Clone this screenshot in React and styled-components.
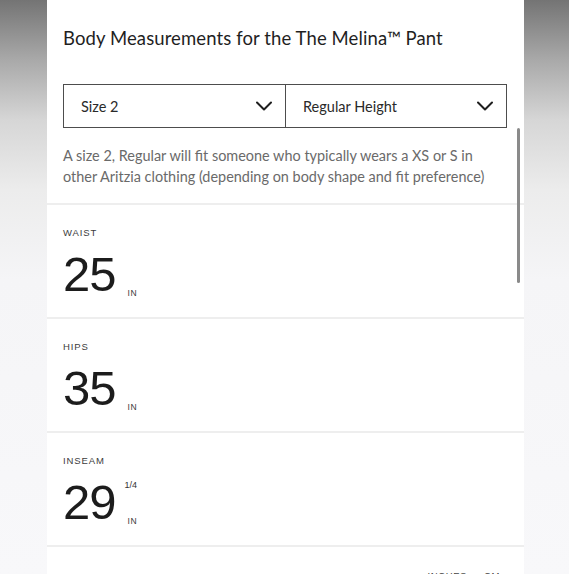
import React from "react";
import styled, { createGlobalStyle } from "styled-components";

const Global = createGlobalStyle`
  html, body { margin: 0; padding: 0; background: #ffffff; }
  body { font-family: "Lato", "Liberation Sans", sans-serif; }
  * { box-sizing: border-box; }
`;

const Page = styled.div`
  height: 574px;
  overflow: hidden;
  background: linear-gradient(
    to bottom,
    #747474 0px,
    #a9a9a9 60px,
    #d6d6d6 120px,
    #ececec 190px,
    #f5f5f7 280px,
    #f8f8fa 574px
  );
  display: flex;
  align-items: flex-start;
`;

const Panel = styled.div`
  margin-left: 47px;
  width: 477px;
  min-height: 574px;
  background: #ffffff;
  display: flex;
  flex-direction: column;
  position: relative;
  & > * { flex-shrink: 0; }
`;

const Head = styled.div`
  padding: 26px 17px 0 16px;
  display: flex;
  flex-direction: column;
`;

const Title = styled.h1`
  margin: 0;
  font-family: "Lato", "Liberation Sans", sans-serif;
  font-weight: 400;
  font-size: 18.5px;
  line-height: 24px;
  color: #1f1f1f;
  letter-spacing: 0.1px;
`;

const Selects = styled.div`
  margin-top: 34px;
  display: grid;
  grid-template-columns: 1fr 1fr;
  height: 44px;
  border: 1.5px solid #4d4d4d;
`;

const Select = styled.div`
  display: flex;
  align-items: center;
  justify-content: space-between;
  padding: 0 13px 0 17px;
  border-left: ${(p) => (p.$first ? "none" : "1.5px solid #4d4d4d")};
  font-family: "Lato", "Liberation Sans", sans-serif;
  font-size: 14.5px;
  color: #2a2a2a;
`;

const Desc = styled.p`
  margin: 17px 0 16px;
  padding-right: 4px;
  font-family: "Lato", "Liberation Sans", sans-serif;
  font-size: 14.45px;
  line-height: 21px;
  color: #6a6a6a;
`;

const Section = styled.div`
  border-top: 2px solid #eeeeee;
  height: 114px;
  padding: 22px 16px 0;
  display: flex;
  flex-direction: column;
`;

const Label = styled.div`
  font-family: "Liberation Sans", sans-serif;
  font-size: 9.5px;
  line-height: 12px;
  letter-spacing: 0.9px;
  color: #3c3c3c;
`;

const ValueRow = styled.div`
  margin-top: 11px;
  display: flex;
  align-items: stretch;
`;

const Number = styled.span`
  font-family: "Liberation Sans", sans-serif;
  font-size: 49px;
  line-height: 49px;
  color: #1c1c1c;
  letter-spacing: -1px;
`;

const Units = styled.div`
  margin-left: 12px;
  display: flex;
  flex-direction: column;
  justify-content: flex-end;
  position: relative;
  padding-bottom: 2px;
`;

const Fraction = styled.span`
  position: absolute;
  top: 2px;
  left: -3px;
  font-family: "Liberation Sans", sans-serif;
  font-size: 9px;
  color: #333;
`;

const Unit = styled.span`
  font-family: "Liberation Sans", sans-serif;
  font-size: 8.5px;
  line-height: 8px;
  letter-spacing: 0.5px;
  color: #3a3a3a;
`;

const Toggle = styled.div`
  border-top: 2px solid #eeeeee;
  padding: 23px 24px 0 0;
  display: flex;
  justify-content: flex-end;
  gap: 17px;
  font-family: "Liberation Sans", sans-serif;
  font-size: 9.5px;
  letter-spacing: 0.6px;
  color: #444;
`;

const Thumb = styled.div`
  position: absolute;
  left: 470px;
  top: 128px;
  width: 3px;
  height: 155px;
  border-radius: 2px;
  background: #8a8a8a;
`;

const Chevron = () => (
  <svg width="16" height="10" viewBox="0 0 16 10" fill="none">
    <path d="M1 1.5 L8 8.5 L15 1.5" stroke="#1e1e1e" strokeWidth="2" strokeLinecap="round" strokeLinejoin="round" />
  </svg>
);

const data = [
  { label: "WAIST", value: "25" },
  { label: "HIPS", value: "35" },
  { label: "INSEAM", value: "29", frac: "1/4" },
];

export default function App() {
  return (
    <>
      <Global />
      <Page>
        <Panel>
          <Head>
            <Title>Body Measurements for the The Melina™ Pant</Title>
            <Selects>
              <Select $first>
                <span>Size 2</span>
                <Chevron />
              </Select>
              <Select>
                <span>Regular Height</span>
                <Chevron />
              </Select>
            </Selects>
            <Desc>
              A size 2, Regular will fit someone who typically wears a XS or S in other Aritzia clothing (depending on body shape and fit preference)
            </Desc>
          </Head>
          {data.map((d) => (
            <Section key={d.label}>
              <Label>{d.label}</Label>
              <ValueRow>
                <Number>{d.value}</Number>
                <Units>
                  {d.frac && <Fraction>{d.frac}</Fraction>}
                  <Unit>IN</Unit>
                </Units>
              </ValueRow>
            </Section>
          ))}
          <Toggle>
            <span>INCHES</span>
            <span>CM</span>
          </Toggle>
          <Thumb />
        </Panel>
      </Page>
    </>
  );
}
